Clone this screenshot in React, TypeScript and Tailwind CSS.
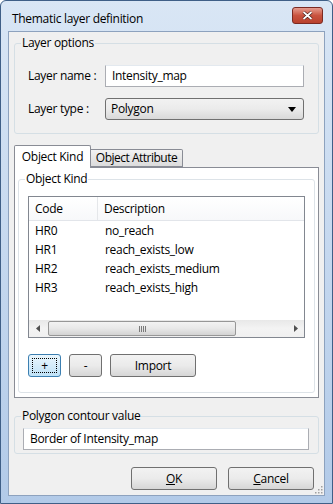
import React from "react";

function GroupBox({
  title,
  className = "",
  children,
}: {
  title: string;
  className?: string;
  children: React.ReactNode;
}) {
  return (
    <fieldset className={`border border-[#d5dfe5] rounded-[3px] min-w-0 ${className}`}>
      <legend className="ml-[6px] px-[1px] leading-[16px] text-[12px] text-black">{title}</legend>
      {children}
    </fieldset>
  );
}

function Button({
  children,
  className = "",
  focused = false,
}: {
  children: React.ReactNode;
  className?: string;
  focused?: boolean;
}) {
  return (
    <div
      className={`h-[23px] rounded-[3px] border flex items-center justify-center text-[12px] text-black ${
        focused
          ? "border-[#3c7fb1] bg-gradient-to-b from-[#eaf6fd] to-[#bfe2f7]"
          : "border-[#707070] bg-gradient-to-b from-[#f2f2f2] via-[#ebebeb] to-[#d6d6d6]"
      } ${className}`}
    >
      {focused ? (
        <div className="w-[calc(100%-6px)] h-[calc(100%-6px)] border border-dotted border-black flex items-center justify-center">
          {children}
        </div>
      ) : (
        children
      )}
    </div>
  );
}

const rows = [
  ["HR0", "no_reach"],
  ["HR1", "reach_exists_low"],
  ["HR2", "reach_exists_medium"],
  ["HR3", "reach_exists_high"],
];

export default function App() {
  return (
    <div className="w-[333px] h-[504px] font-['Segoe_UI','Open_Sans',sans-serif] text-[12px] tracking-[-0.3px] text-black">
      <div className="w-full h-full border border-[#3f5f87] rounded-t-[6px] bg-gradient-to-b from-[#d9e6f5] via-[#c5d8ef] to-[#b2cae8] flex flex-col">
        {/* title bar */}
        <div className="h-[30px] flex items-center justify-between pl-[11px] pr-[9px] shrink-0">
          <span className="text-[12px] text-black pt-[6px]">Thematic layer definition</span>
          <div className="mt-[-1px] w-[31px] h-[17px] rounded-[3px] border border-[#7b2a22] bg-gradient-to-b from-[#e59c8f] via-[#c9533f] to-[#b9412d] flex items-center justify-center">
            <svg width="11" height="9" viewBox="0 0 11 9">
              <path d="M1.5 1 L9.5 8 M9.5 1 L1.5 8" stroke="#3a1410" strokeWidth="3" />
              <path d="M1.5 1 L9.5 8 M9.5 1 L1.5 8" stroke="#ffffff" strokeWidth="1.8" />
            </svg>
          </div>
        </div>

        {/* client area */}
        <div className="mx-[7px] h-[465px] border border-[#8da2be] bg-[#f0f0f0] flex flex-col px-[5px] pt-[3px] relative">
          <GroupBox title="Layer options">
            <div className="pl-[13px] pr-[14px] pt-[14px] pb-[13px] flex flex-col gap-[11px]">
              <div className="flex items-center">
                <span className="w-[77px]">Layer name :</span>
                <div className="flex-1 h-[22px] border border-[#abadb3] border-t-[#e3e9ef] bg-white flex items-center pl-[6px]">
                  Intensity_map
                </div>
              </div>
              <div className="flex items-center">
                <span className="w-[77px]">Layer type :</span>
                <div className="flex-1 h-[22px] rounded-[3px] border border-[#707070] bg-gradient-to-b from-[#f2f2f2] via-[#ebebeb] to-[#d9d9d9] flex items-center justify-between pl-[5px] pr-[7px]">
                  <span>Polygon</span>
                  <svg width="8" height="5" viewBox="0 0 8 5">
                    <path d="M0 0 H8 L4 5 Z" fill="#000" />
                  </svg>
                </div>
              </div>
            </div>
          </GroupBox>

          {/* tabs */}
          <div className="mt-[11px] flex items-end h-[22px]">
            <div className="relative z-10 mb-[-1px] h-[23px] w-[77px] border border-b-0 border-[#898c95] rounded-t-[2px] bg-white flex items-start justify-center pt-[2px]">
              Object Kind
            </div>
            <div className="h-[18px] w-[92px] border border-l-0 border-[#898c95] rounded-tr-[2px] bg-gradient-to-b from-[#f2f2f2] to-[#dcdcdc] flex items-center justify-center tracking-[-0.5px]">
              Object Attribute
            </div>
          </div>
          <div className="border border-[#898c95] bg-white px-[3px] pt-[3px] pb-[4px]">
            <GroupBox title="Object Kind" className="!border-[#dde3e8]">
              <div className="px-[9px] pt-[9px] pb-[15px]">
                <div className="h-[142px] border border-[#828790] bg-white flex flex-col">
                  <div className="h-[24px] shrink-0 flex items-center border-b border-[#e2e5ea] bg-gradient-to-b from-white to-[#f7f8fa]">
                    <span className="w-[69px] pl-[6px] h-full flex items-center border-r border-[#e5e7ea]">Code</span>
                    <span className="pl-[6px]">Description</span>
                  </div>
                  {rows.map(([c, d]) => (
                    <div key={c} className="h-[19px] shrink-0 flex items-center">
                      <span className="w-[70px] pl-[6px]">{c}</span>
                      <span className="pl-[6px]">{d}</span>
                    </div>
                  ))}
                  <div className="flex-1" />
                  <div className="h-[17px] shrink-0 bg-gradient-to-b from-[#e8e8e8] via-[#f3f3f3] to-[#f0f0f0] flex items-center">
                    <div className="w-[17px] h-full flex items-center justify-center">
                      <svg width="4" height="7" viewBox="0 0 4 7">
                        <path d="M4 0 V7 L0 3.5 Z" fill="#505050" />
                      </svg>
                    </div>
                    <div className="ml-[2px] w-[188px] h-[15px] rounded-[2px] border border-[#979797] bg-gradient-to-b from-[#f3f3f3] via-[#e8e8e8] to-[#d3d3d3] flex items-center justify-center">
                      <div className="flex gap-[1px]">
                        <div className="w-[1px] h-[6px] bg-[#7a7a7a]" />
                        <div className="w-[1px] h-[6px] bg-[#7a7a7a]" />
                        <div className="w-[1px] h-[6px] bg-[#7a7a7a]" />
                        <div className="w-[1px] h-[6px] bg-[#7a7a7a]" />
                      </div>
                    </div>
                    <div className="flex-1" />
                    <div className="w-[17px] h-full flex items-center justify-center">
                      <svg width="4" height="7" viewBox="0 0 4 7">
                        <path d="M0 0 V7 L4 3.5 Z" fill="#505050" />
                      </svg>
                    </div>
                  </div>
                </div>
                <div className="mt-[16px] flex gap-[8px]">
                  <Button focused className="w-[33px]">+</Button>
                  <Button className="w-[33px]">-</Button>
                  <Button className="w-[86px]">Import</Button>
                </div>
              </div>
            </GroupBox>
          </div>

          <GroupBox title="Polygon contour value" className="mt-[10px]">
            <div className="pl-[8px] pr-[9px] pt-[4px] pb-[3px]">
              <div className="h-[22px] border border-[#abadb3] border-t-[#e3e9ef] bg-white flex items-center pl-[6px]">
                Border of Intensity_map
              </div>
            </div>
          </GroupBox>

          <div className="mt-[13px] flex justify-end gap-[11px] pr-[5px]">
            <Button className="w-[86px]">
              <span><span className="underline">O</span>K</span>
            </Button>
            <Button className="w-[86px]">
              <span><span className="underline">C</span>ancel</span>
            </Button>
          </div>

          {/* size grip */}
          <svg className="absolute right-[1px] bottom-[1px]" width="10" height="10" viewBox="0 0 10 10">
            {[
              [8, 2],
              [8, 5],
              [5, 5],
              [8, 8],
              [5, 8],
              [2, 8],
            ].map(([x, y]) => (
              <rect key={`${x}-${y}`} x={x} y={y} width="1.5" height="1.5" fill="#a0a0a0" />
            ))}
          </svg>
        </div>
      </div>
    </div>
  );
}
